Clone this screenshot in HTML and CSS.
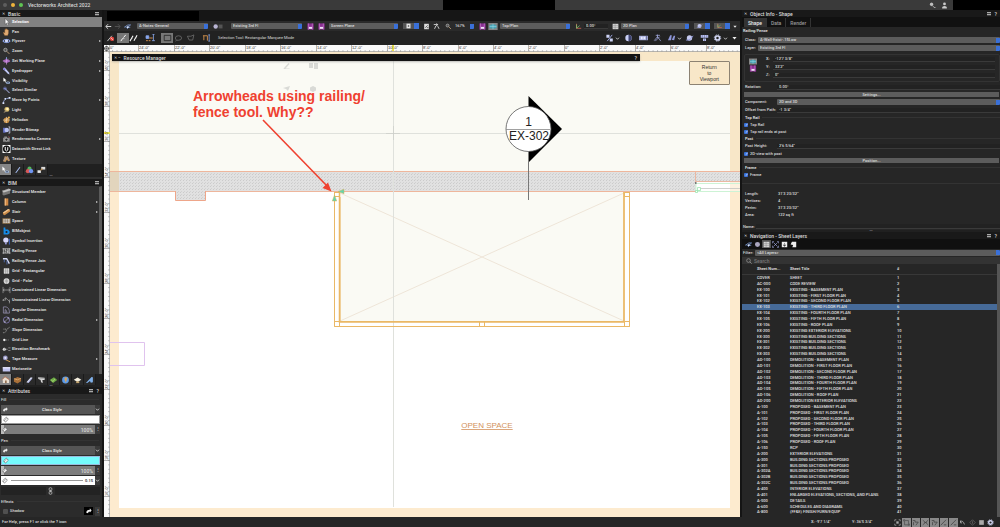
FILE: index.html
```html
<!DOCTYPE html>
<html lang="en">
<head>
<meta charset="utf-8">
<title>Vectorworks Architect 2022</title>
<link rel="stylesheet" href="styles.css">
</head>
<body>
<svg class="defs" width="0" height="0" aria-hidden="true">
<defs>
<symbol id="cursor" viewBox="0 0 9 9"><path d="M3 .5v6.5l1.5-1.3 1.2 2.6 1-.5-1.2-2.5h2z" fill="#fff" stroke="#333" stroke-width=".4"/></symbol>
<symbol id="hand" viewBox="0 0 9 9"><path d="M2.5 8.5L.8 5.2l.8-.5 1 1V1.8h1V.9h1v.5h1.1v.8h1V6l-.9 2.5z" fill="#e0aa72" stroke="#8c5a2a" stroke-width=".4"/></symbol>
<symbol id="fly" viewBox="0 0 9 9"><ellipse cx="4.5" cy="4.5" rx="4" ry="1.8" fill="none" stroke="#7e9be8" stroke-width="1"/><circle cx="4.5" cy="4.3" r="1.9" fill="#d4dcfa"/><path d="M1 3l-.8 2 2 .4zM8 3l.8 2-2 .4z" fill="#9db4f5"/></symbol>
<symbol id="zoom" viewBox="0 0 9 9"><circle cx="3.3" cy="3.3" r="1.9" fill="#555" stroke="#bbb" stroke-width=".8"/><path d="M4.8 4.8L7.8 7.8" stroke="#b99a76" stroke-width="1.1"/></symbol>
<symbol id="plane" viewBox="0 0 9 9"><path d="M0 4.5L4 2l5 2.5L5 7z" fill="#9557ae"/><path d="M4.5.5v8M.5 4.5h8M2 7l5-5" stroke="#d9a0ea" stroke-width=".7"/><path d="M4.5 0l1 1.8h-2z" fill="#6cb5ec"/></symbol>
<symbol id="dropper" viewBox="0 0 9 9"><path d="M1 1l1.5-.3 4.8 5.6.7 2-2-.8L1 2.6z" fill="#c3cbf7"/><path d="M1 1.5l2 2" stroke="#7d6de0" stroke-width="1.6"/></symbol>
<symbol id="vis" viewBox="0 0 9 9"><path d="M1 .5v4.7l1.2-.8.9 1.8.8-.4L3 4h1.6z" fill="#fff"/><ellipse cx="6.2" cy="6.5" rx="2.3" ry="1.4" fill="#9fb9de"/><circle cx="6.2" cy="6.5" r=".8" fill="#334"/></symbol>
<symbol id="wand" viewBox="0 0 9 9"><path d="M3 3l5 5" stroke="#b6bff6" stroke-width="1.1"/><path d="M2.8.5v4.6M.5 2.8h4.6M1.2 1.2l3.2 3.2M4.4 1.2L1.2 4.4" stroke="#8a96ef" stroke-width=".5"/></symbol>
<symbol id="move" viewBox="0 0 9 9"><path d="M1 8q0-5 6.5-5.7" fill="none" stroke="#9ab0e8" stroke-width=".9"/><path d="M0 7h2v2H0zM7 1h2v2H7zM2.3 2.2h1.6v1.6H2.3z" fill="#dde5ff"/></symbol>
<symbol id="light" viewBox="0 0 9 9"><circle cx="5" cy="3.8" r="2.8" fill="#d9bd6d"/><circle cx="5.5" cy="3.3" r="1.4" fill="#fff2bd"/><path d="M1 8l2.3-3.4 1.8 1.7z" fill="#9b8a6a"/></symbol>
<symbol id="helio" viewBox="0 0 9 9"><circle cx="4.5" cy="4.8" r="3.2" fill="#c78b3e"/><path d="M.5 4.5h8M4.5 1v7M2 7l5-5.4" stroke="#ead6b4" stroke-width=".7"/><circle cx="7.2" cy="1.8" r="1.2" fill="#e9b04d"/></symbol>
<symbol id="bitmap" viewBox="0 0 9 9"><path d="M.7 2h3v5.5h-3z" fill="#6673ca"/><circle cx="4.8" cy="4.6" r="2.5" fill="#bbc4f3"/><path d="M6.7 1h1.5v7H6.7" fill="none" stroke="#e7eaff" stroke-width=".8"/></symbol>
<symbol id="camera" viewBox="0 0 9 9"><path d="M.6 3h7.5v4.6H.6zM2 1.7h3V3H2z" fill="#8a8a8a"/><circle cx="4.4" cy="5.2" r="1.6" fill="#222" stroke="#ddd" stroke-width=".5"/><path d="M6.5 1.6l2 1.5" stroke="#c55" stroke-width=".6"/></symbol>
<symbol id="unreal" viewBox="0 0 9 9"><path d="M0 0h9v9H0z" fill="#fff"/><circle cx="4.5" cy="4.5" r="4" fill="#111"/><path d="M3.1 2.2v3.5q1.4 2 2.8 0V2.4" fill="none" stroke="#fff" stroke-width="1.1"/></symbol>
<symbol id="texture" viewBox="0 0 9 9"><path d="M.5 7L2.7 1.2l1.6.7L6 1l2.5 5.2-2.2.8-1.2-2L3.3 7.8z" fill="#c39254"/><path d="M1.5 6.5l2-4M5.5 2l2 4" stroke="#7589d1" stroke-width=".7"/></symbol>
<symbol id="member" viewBox="0 0 9 9"><path d="M0 3l7-2.5 2 .8v2L2 6 0 5z" fill="#aaa"/><path d="M0 5.5L8.5 3.2v3L1.5 8.5 0 7.5z" fill="#777"/><path d="M0 3l1.8 1L9 1.5" fill="none" stroke="#eee" stroke-width=".5"/></symbol>
<symbol id="column" viewBox="0 0 9 9"><path d="M2.5.5h4v8h-4z" fill="#cf8845"/><path d="M2.5.5h1.3v8H2.5z" fill="#f0bb82"/></symbol>
<symbol id="stair" viewBox="0 0 9 9"><path d="M.5 5L6.5 1l2 1v2l-6 4.2-2-1.3z" fill="#cb8c49"/><path d="M.5 5L2 5.9 8 2.1 6.5 1z" fill="#f0c590"/></symbol>
<symbol id="space" viewBox="0 0 9 9"><path d="M0 1.5h9v6H0z" fill="#a58457"/><path d="M1 2.5h7v4H1z" fill="#ddd"/><path d="M3 2.5v4M5.5 2.5v4M1 4.5h7" stroke="#6b573e" stroke-width=".6"/></symbol>
<symbol id="bimobj" viewBox="0 0 9 9"><path d="M1.2.5h2v2.4h3L8 4.7v2.2L6.2 8.5h-5z" fill="#168ce8"/><circle cx="4.5" cy="5.6" r="1.2" fill="#202430"/></symbol>
<symbol id="bulb" viewBox="0 0 9 9"><circle cx="3.8" cy="3.5" r="3" fill="#d8d8fb"/><path d="M2.8 6.3h2v2h-2z" fill="#9a9adb"/><path d="M7.7 2v6.5" stroke="#456cd8"/></symbol>
<symbol id="rail" viewBox="0 0 9 9"><path d="M0 2h9M0 6.8h9M1 1.5v6M3 2v4.8M6 2v4.8M8 1.5v6" stroke="#d4d4d4" stroke-width=".8"/><path d="M2.6 3l3.8 3M6.4 3v3" stroke="#fff" stroke-width=".6"/></symbol>
<symbol id="railjoin" viewBox="0 0 9 9"><path d="M.5 2h4.2l3 5.5" fill="none" stroke="#d7dcf5" stroke-width="1.5"/><path d="M2 3v3M5 4v4.5" stroke="#5d7fd4" stroke-width=".8"/></symbol>
<symbol id="gridr" viewBox="0 0 9 9"><path d="M1.5 1.5h6v6h-6z" fill="#eee"/><path d="M3.5 1v7M5.5 1v7M1 3.5h7M1 5.5h7" stroke="#777" stroke-width=".5"/></symbol>
<symbol id="gridp" viewBox="0 0 9 9"><circle cx="4.5" cy="4.5" r="3.2" fill="#eee"/><path d="M4.5 1v7M1 4.5h7M2 2l5 5M7 2L2 7" stroke="#888" stroke-width=".4"/><circle cx="4.5" cy="4.5" r="1.6" fill="none" stroke="#888" stroke-width=".4"/></symbol>
<symbol id="dim" viewBox="0 0 9 9"><path d="M.6 1v7M8.4 1v7M.6 4.5h7.8M2.2 3.4L.8 4.5l1.4 1.1M6.8 3.4l1.4 1.1-1.4 1.1" fill="none" stroke="#b5b5b5" stroke-width=".7"/></symbol>
<symbol id="udim" viewBox="0 0 9 9"><path d="M.5 5L3.5 2l4.8 4.6M3.5 2v3M7.8 4v4.3M1 3.4L.6 5.1l1.8-.2" fill="none" stroke="#b5b5b5" stroke-width=".7"/></symbol>
<symbol id="adim" viewBox="0 0 9 9"><path d="M1 8V1h3q4 1 3.8 7zM3 8V4q2 .5 2 4" fill="none" stroke="#a9a5c9" stroke-width=".7"/></symbol>
<symbol id="rdim" viewBox="0 0 9 9"><circle cx="4.5" cy="4.5" r="3.5" fill="none" stroke="#8f86c6" stroke-width=".8"/><path d="M2 7l5-5M5.2 2H7v1.8M2 5.2V7h1.8" fill="none" stroke="#c6c2e6" stroke-width=".6"/></symbol>
<symbol id="sdim" viewBox="0 0 9 9"><path d="M.5 7.5q3.5.5 4-3.5L8.5 1M1 3.5h1.2M3.2 2.8v1.5" fill="none" stroke="#aaa" stroke-width=".8" stroke-dasharray="1.6 .5"/></symbol>
<symbol id="gline" viewBox="0 0 9 9"><circle cx="2" cy="4.5" r="1.3" fill="#eee"/><path d="M3 4.5h1.8M6 4.5h.8" stroke="#ccc" stroke-width=".7"/></symbol>
<symbol id="elev" viewBox="0 0 9 9"><circle cx="2" cy="4.8" r="1.7" fill="#eee"/><path d="M2 3v3.6M4 4.8h1.8M6.5 3.2H9M6.5 6.2H9" stroke="#999" stroke-width=".9"/></symbol>
<symbol id="tape" viewBox="0 0 9 9"><circle cx="3.2" cy="3.3" r="2.7" fill="#9b9bc8"/><circle cx="3.2" cy="3.3" r="1.2" fill="#e4e4fa"/><path d="M4 5.6l4.6 2" stroke="#dba650" stroke-width="1"/></symbol>
<symbol id="mario" viewBox="0 0 9 9"><path d="M.3 2.5h8.4v4.8H.3z" fill="#bfc3ef"/><path d="M.3 2.5h8.4v1.3H.3z" fill="#eef"/></symbol>
<symbol id="pencil" viewBox="0 0 9 9"><path d="M2 7.5L6.7 1l1 .7L3 8z" fill="#a9c0f7"/></symbol>
<symbol id="balls" viewBox="0 0 9 9"><circle cx="4.5" cy="2.8" r="2.3" fill="#55b45c"/><circle cx="2.7" cy="5.8" r="2.4" fill="#d85757"/><circle cx="6.3" cy="5.8" r="2.4" fill="#6f95f2"/></symbol>
<symbol id="roller" viewBox="0 0 9 9"><path d="M4.2 1h4.5v3H4.2z" fill="#ddd"/><path d="M0 4.8h3.8v3H0z" fill="#e6e6e6"/><path d="M3.5 5l2-2" stroke="#bd8948" stroke-width="1.2"/></symbol>
<symbol id="house" viewBox="0 0 9 9"><path d="M.5 4.5L4 1l4.5 3v4h-7V4.7z" fill="#e9dfd2"/><path d="M.2 4.5L4 .8l4.8 3.5" fill="none" stroke="#c46c46" stroke-width=".8"/><path d="M4 5h1.8v3H4z" fill="#8f6a4b"/></symbol>
<symbol id="box" viewBox="0 0 9 9"><path d="M.5 3l4-2 4 1.5V6L4.5 8.5l-4-2z" fill="#a86f38"/><path d="M.5 3l4 1.3 4-1.8" fill="none" stroke="#f0c083" stroke-width=".7"/></symbol>
<symbol id="tool" viewBox="0 0 9 9"><path d="M1 7L6 1.5l2 .5-4.5 6z" fill="#d9dcf2"/><path d="M3 7.7L7 3" stroke="#7d84c4" stroke-width=".8"/></symbol>
<symbol id="duct" viewBox="0 0 9 9"><path d="M.5 1.5L8 2v2.5H5.5L6 8 4 7 3.5 4.5 1 3.5z" fill="#d8d8d8"/><path d="M.5 1.5l3 1.5L8 2.7" fill="none" stroke="#777" stroke-width=".5"/></symbol>
<symbol id="land" viewBox="0 0 9 9"><path d="M.3 4.5L5 1.5l3.7 3L4 8z" fill="#6cac45"/><path d="M2 4.5l2 1.7 2-3" fill="none" stroke="#c6e48d" stroke-width=".7"/></symbol>
<symbol id="globe" viewBox="0 0 9 9"><circle cx="4.5" cy="4.5" r="3.8" fill="#5b9bea"/><path d="M3.7 1.3l3 .7-.8 2.2L5 7.5 3.3 4z" fill="#dba55c"/></symbol>
<symbol id="lamp" viewBox="0 0 9 9"><path d="M.3 4.2l4.3-2.4 4.2 2.4-4.2 2.6z" fill="#f6f1e2"/><path d="M3 6h3.5v2H3z" fill="#c3a46d"/></symbol>
<symbol id="plug" viewBox="0 0 9 9"><path d="M.5 8L6.8 1l1.5.3V7L6 7.5 5 5.5 2 8z" fill="#7fb0ea"/></symbol>
<symbol id="link" viewBox="0 0 9 9"><path d="M2 6.5Q2 3 6 3V1.5L8 4 6 6.3V5Q4 5 4 7z" fill="#eee"/></symbol>
<symbol id="can" viewBox="0 0 9 9"><path d="M1.3 5L5 1.5l2.5 2.7L3.8 7.8z" fill="#fff" stroke="#555" stroke-width=".8"/><path d="M2 6.3L5.7 3" stroke="#555" stroke-width=".5"/></symbol>
<symbol id="chain" viewBox="0 0 5 9"><rect x="1" y=".8" width="3" height="3.400" rx="1.2" fill="none" stroke="#ccc" stroke-width=".8"/><rect x="1" y="4.800" width="3" height="3.400" rx="1.2" fill="none" stroke="#ccc" stroke-width=".8"/><path d="M2.500 3v3" stroke="#ccc" stroke-width=".7"/></symbol>
<symbol id="chev" viewBox="0 0 5 9"><path d="M1 3.700l1.500 1.600L4 3.700" fill="none" stroke="currentColor" stroke-width=".8"/></symbol>
<symbol id="back" viewBox="0 0 9 9"><path d="M8 4.5H1.5M4 1.5l-3 3 3 3" fill="none" stroke="#eee" stroke-width="1.1"/></symbol>
<symbol id="fwd" viewBox="0 0 9 9"><path d="M1 4.5h6.5M5 1.5l3 3-3 3" fill="none" stroke="#555" stroke-width="1.1"/></symbol>
<symbol id="share" viewBox="0 0 9 9"><path d="M.3 5.5L5 2.5h4M2 5.5h6M4 7.8l3-5" fill="none" stroke="#8fb2f2" stroke-width=".9"/><circle cx="4.8" cy="5.4" r="1.1" fill="#e1eaff"/></symbol>
<symbol id="layers" viewBox="0 0 12 9"><circle cx="3" cy="4.5" r="2.8" fill="#b9b5d4"/><path d="M6.8 2h5v5h-5z" fill="#555"/></symbol>
<symbol id="purple" viewBox="0 0 9 9"><path d="M.5.5h8v8h-8z" fill="#8a2f91"/><path d="M2 .5v8M6.8.5v8" stroke="#d48bdc" stroke-width=".7"/><path d="M2.5 5h4v2.5h-4z" fill="#eee3f4"/></symbol>
<symbol id="teal" viewBox="0 0 12 9"><path d="M0 0h12v9H0z" fill="#858585"/><path d="M1.5 3q4.5-2.5 9 0v3.5q-4.5 2-9 0z" fill="#49a4b5"/><path d="M6 1v7M1.5 4.5h9" stroke="#a8e3ef" stroke-width=".6"/></symbol>
<symbol id="page" viewBox="0 0 9 9"><path d="M1.5 1h6v7h-6z" fill="#dedede"/><path d="M3 6l3-3M5 6h2" stroke="#444" stroke-width="1"/></symbol>
<symbol id="swap" viewBox="0 0 9 9"><path d="M1 2h5l-1.5-1.5M6.5 2Q3 3 2 7.5M6 4l1.8 3.5" fill="none" stroke="#ddd" stroke-width="1.1"/></symbol>
<symbol id="axis" viewBox="0 0 9 9"><path d="M2 1v5.8h6" fill="none" stroke="#d65" stroke-width="1"/><path d="M2 2v4.8l4-3.5" fill="none" stroke="#7dcd72" stroke-width=".9"/></symbol>
<symbol id="list" viewBox="0 0 9 9"><path d="M.8 1h7.4v7H.8z" fill="#d4d4d4"/><path d="M.8 3.3h7.4M.8 5.6h7.4M4 1v7" stroke="#777" stroke-width=".5"/></symbol>
<symbol id="snapoff" viewBox="0 0 9 9"><path d="M1 8l5-6" stroke="#ddd" stroke-width="1"/><circle cx="6.2" cy="5.5" r="2.4" fill="#e6453d"/><path d="M4.8 4.2L7.6 6.9" stroke="#fff" stroke-width=".7"/></symbol>
<symbol id="bolt" viewBox="0 0 9 9"><path d="M1.5 8l2-3M4.5 4L7 1" stroke="#fff" stroke-width="1.1"/><path d="M3 5.2h2.6" stroke="#ddd" stroke-width=".8"/></symbol>
<symbol id="bolts" viewBox="0 0 9 9"><path d="M.5 8L4 2M5 7.5L8.5 1.5" stroke="#fff" stroke-width="1.2"/><path d="M2 4.5h2M6 4.3h2" stroke="#bbb" stroke-width=".7"/></symbol>
<symbol id="brace" viewBox="0 0 10 9"><path d="M0 2h3v3H0zM6.6 0H10M8.3 0v7.5M6.6 7.5H10" fill="#8aa8ef" stroke="#8aa8ef" stroke-width=".9"/><path d="M3.5 4.5h4M0 7.5h2M3 7.5h2" stroke="#e39a51" stroke-width="1"/></symbol>
<symbol id="marq" viewBox="0 0 9 9"><path d="M.8 1.5h7.4v6H.8z" fill="#777" stroke="#222" stroke-width=".9"/></symbol>
<symbol id="lasso" viewBox="0 0 9 9"><path d="M1 4.5Q1 2 4.5 2T8 4.5 4.5 7H2.5L1 8M2.5 7Q1 6 1 4.5" fill="none" stroke="#777" stroke-width=".8"/></symbol>
<symbol id="poly" viewBox="0 0 9 9"><path d="M1 2.5h4L8.3 1 7 6.8H3z" fill="none" stroke="#777" stroke-width=".8"/></symbol>
<symbol id="door" viewBox="0 0 9 9"><path d="M.5 2h5v5.5M1.5 2v5" fill="none" stroke="#c98b4c" stroke-width="1.1"/><path d="M7.5 1v7M6.5 1h2M6.5 8h2" stroke="#8fb0f7" stroke-width=".8"/></symbol>
<symbol id="pct" viewBox="0 0 9 9"><path d="M1 .8h3.500v3.500H1zM4.800 5h3.400v3.400H4.800z" fill="#cdd3f5"/><path d="M2 8L7.5 1" stroke="#9aa3dc" stroke-width="1.1"/></symbol>
<symbol id="half" viewBox="0 0 9 9"><circle cx="4.5" cy="4.5" r="3.6" fill="#c9cff5"/><path d="M4.5.9a3.6 3.6 0 010 7.2z" fill="#3e4370"/></symbol>
<symbol id="reel" viewBox="0 0 10 9"><path d="M0 2h10v5H0z" fill="#aab1df"/><path d="M2 3h2v3H2zM5 3h2v3H5z" fill="#e9ebff"/><path d="M8.5 2v5" stroke="#3b3f66" stroke-width=".7"/></symbol>
<symbol id="spark" viewBox="0 0 9 9"><path d="M.8 7.5L4.5 3l3.7 5M4.5.6v4M2.5 1.5h4.8M2 8l5-5" fill="none" stroke="#aab2e8" stroke-width=".8"/></symbol>
<symbol id="pipe" viewBox="0 0 9 9"><path d="M.5 7L3 1.5h1.8L4 7zM4.8 6.5L7 2h1.7L7.5 7z" fill="#8e96d7"/></symbol>
<symbol id="saturn" viewBox="0 0 9 9"><circle cx="4.5" cy="4.5" r="3" fill="#c5caf0"/><path d="M.5 6.8q5 1 8-4.8" fill="none" stroke="#8f97da" stroke-width="1"/></symbol>
<symbol id="tee" viewBox="0 0 9 9"><path d="M.3 1.2h8.4v3H.3zM2.8 5h3.4v3H2.8z" fill="#b9c0ee"/><path d="M4.5 1v7M2 1v3M7 1v3" stroke="#4a4f7a" stroke-width=".5"/></symbol>
<symbol id="gear" viewBox="0 0 9 9"><circle cx="4.5" cy="4.5" r="2.3" fill="none" stroke="currentColor" stroke-width="1.8"/><circle cx="4.5" cy="4.5" r="3.6" fill="none" stroke="currentColor" stroke-width="1" stroke-dasharray="1.5 1.33"/></symbol>
<symbol id="down" viewBox="0 0 6 9"><path d="M.5 3.2h5L3 6.2z" fill="#eee"/></symbol>
<symbol id="lens" viewBox="0 0 9 9"><circle cx="3.8" cy="3.8" r="2.8" fill="none" stroke="#aaa" stroke-width=".9"/><path d="M5.8 5.8L8.5 8.5" stroke="#aaa" stroke-width="1"/></symbol>
<symbol id="seek" viewBox="0 0 9 9"><circle cx="3.300" cy="3" r="1.700" fill="#bbb" stroke="#ddd" stroke-width=".8"/><path d="M4.800 4.800l1.600 2.200h2" fill="none" stroke="#ccc" stroke-width=".9"/></symbol>
<symbol id="person" viewBox="0 0 9 9"><circle cx="4.5" cy="2.5" r="1.8" fill="#ccc"/><path d="M1.5 8.5V7q0-2 3-2t3 2v1.5z" fill="#ccc"/></symbol>
<symbol id="ball" viewBox="0 0 9 9"><circle cx="4.5" cy="4.5" r="3.2" fill="#aaa6bf"/></symbol>
<symbol id="vp" viewBox="0 0 9 9"><path d="M.5 3V.8h2M6.5.8h2V3M8.5 6v2.2h-2M2.5 8.2h-2V6M2 2l5 5M7 2L2 7" fill="none" stroke="#a8b0ea" stroke-width=".8"/></symbol>
<symbol id="fit" viewBox="0 0 9 9"><path d="M1.500 1h6v7h-6z" fill="#e4e4e4"/><path d="M3.500 3h2v3h-2z" fill="#777"/></symbol>
<symbol id="pin" viewBox="0 0 9 9"><path d="M1 1h7v7H1z" fill="#eee"/><path d="M4.5 2.5v2M3 5h3L4.5 7z" stroke="#444" fill="#444" stroke-width=".7"/></symbol>
<symbol id="flag" viewBox="0 0 9 9"><path d="M2.5 1H8v7H3L4 5 .8 4.4z" fill="#eee"/></symbol>
<symbol id="diag" viewBox="0 0 9 9"><path d="M1 8L7.8 1M5 7.5h3" stroke="#444" stroke-width="1"/></symbol>
<symbol id="cross" viewBox="0 0 9 9"><path d="M1 1.5l7 6M8 1.5l-7 6M3 4.5h3" stroke="#444" stroke-width=".9"/></symbol>
<symbol id="sq" viewBox="0 0 9 9"><path d="M2 2h5v5.500H2zM.7 1h2M.7 1v2M8.300 8h-2M8.300 8V6" fill="none" stroke="#444" stroke-width=".8"/></symbol>
<symbol id="ang" viewBox="0 0 9 9"><path d="M1 2h3v2h4M2 8V4M5 8l3-4" fill="none" stroke="#444" stroke-width="1"/></symbol>
<symbol id="snapg" viewBox="0 0 9 9"><path d="M1 3V1h2M6 1h2v2M8 6v2H6M3 8H1V6" fill="none" stroke="#bbb" stroke-width=".8"/><path d="M3 3h3v3H3z" fill="#aaa"/></symbol>
<symbol id="arc" viewBox="0 0 9 9"><path d="M1.500 3.500Q5 1 7 7M2 2v3h2" fill="none" stroke="#bbb" stroke-width="1"/></symbol>
<symbol id="diam" viewBox="0 0 9 9"><path d="M4.500 1L8 4.500 4.500 8 1 4.500zM4.500 3v3" fill="none" stroke="#777" stroke-width=".8"/></symbol>
<symbol id="block" viewBox="0 0 9 9"><path d="M1.500 1.500h6v6h-6z" fill="#aaa"/></symbol>
</defs>
</svg>

<div class="app">
<header class="titlebar">
  <span class="lights"><i class="light"></i><i class="light amber"></i><i class="light green"></i></span>
  <h1 class="app-title">Vectorworks Architect 2022</h1>
  <span class="mask mask-mid"></span>
  <svg class="ic"><use href="#seek"/></svg>
  <svg class="ic"><use href="#person"/></svg>
  <span class="mask mask-end"></span>
</header>

<aside class="palettes">
  <section class="basic">
    <h2 class="bar"><span>✕</span> Basic <span class="bar-end"><i class="ham"></i></span></h2>
    <ul class="tools">
      <li class="tool on"><svg class="ic"><use href="#cursor"/></svg>Selection</li>
      <li class="tool"><svg class="ic"><use href="#hand"/></svg>Pan</li>
      <li class="tool more"><svg class="ic"><use href="#fly"/></svg>Flyover</li>
      <li class="tool"><svg class="ic"><use href="#zoom"/></svg>Zoom</li>
      <li class="tool more"><svg class="ic"><use href="#plane"/></svg>Set Working Plane</li>
      <li class="tool more"><svg class="ic"><use href="#dropper"/></svg>Eyedropper</li>
      <li class="tool"><svg class="ic"><use href="#vis"/></svg>Visibility</li>
      <li class="tool"><svg class="ic"><use href="#wand"/></svg>Select Similar</li>
      <li class="tool more"><svg class="ic"><use href="#move"/></svg>Move by Points</li>
      <li class="tool"><svg class="ic"><use href="#light"/></svg>Light</li>
      <li class="tool"><svg class="ic"><use href="#helio"/></svg>Heliodon</li>
      <li class="tool"><svg class="ic"><use href="#bitmap"/></svg>Render Bitmap</li>
      <li class="tool more"><svg class="ic"><use href="#camera"/></svg>Renderworks Camera</li>
      <li class="tool"><svg class="ic"><use href="#unreal"/></svg>Datasmith Direct Link</li>
      <li class="tool"><svg class="ic"><use href="#texture"/></svg>Texture</li>
    </ul>
    <div class="tabs">
      <button class="tab on" aria-label="Select"><svg class="ic"><use href="#vis"/></svg></button>
      <button class="tab" aria-label="Draw"><svg class="ic"><use href="#pencil"/></svg></button>
      <button class="tab" aria-label="Render"><svg class="ic"><use href="#balls"/></svg></button>
      <button class="tab" aria-label="Attributes"><svg class="ic"><use href="#roller"/></svg></button>
    </div>
    <div class="grip">•••</div>
  </section>
  <section>
    <h2 class="bar"><span>✕</span> BIM <span class="bar-end"><i class="ham"></i></span></h2>
    <ul class="tools bim">
      <li class="tool"><svg class="ic"><use href="#member"/></svg>Structural Member</li>
      <li class="tool more"><svg class="ic"><use href="#column"/></svg>Column</li>
      <li class="tool more"><svg class="ic"><use href="#stair"/></svg>Stair</li>
      <li class="tool"><svg class="ic"><use href="#space"/></svg>Space</li>
      <li class="tool"><svg class="ic"><use href="#bimobj"/></svg>BIMobject</li>
      <li class="tool"><svg class="ic"><use href="#bulb"/></svg>Symbol Insertion</li>
      <li class="tool"><svg class="ic"><use href="#rail"/></svg>Railing/Fence</li>
      <li class="tool"><svg class="ic"><use href="#railjoin"/></svg>Railing/Fence Join</li>
      <li class="tool"><svg class="ic"><use href="#gridr"/></svg>Grid - Rectangular</li>
      <li class="tool"><svg class="ic"><use href="#gridp"/></svg>Grid - Polar</li>
      <li class="tool"><svg class="ic"><use href="#dim"/></svg>Constrained Linear Dimension</li>
      <li class="tool"><svg class="ic"><use href="#udim"/></svg>Unconstrained Linear Dimension</li>
      <li class="tool"><svg class="ic"><use href="#adim"/></svg>Angular Dimension</li>
      <li class="tool more"><svg class="ic"><use href="#rdim"/></svg>Radial Dimension</li>
      <li class="tool"><svg class="ic"><use href="#sdim"/></svg>Slope Dimension</li>
      <li class="tool"><svg class="ic"><use href="#gline"/></svg>Grid Line</li>
      <li class="tool"><svg class="ic"><use href="#elev"/></svg>Elevation Benchmark</li>
      <li class="tool more"><svg class="ic"><use href="#tape"/></svg>Tape Measure</li>
      <li class="tool"><svg class="ic"><use href="#mario"/></svg>Marionette</li>
    </ul>
    <div class="tabs">
      <button class="tab on" aria-label="Building"><svg class="ic"><use href="#house"/></svg></button>
      <button class="tab" aria-label="Objects"><svg class="ic"><use href="#box"/></svg></button>
      <button class="tab" aria-label="Detailing"><svg class="ic"><use href="#tool"/></svg></button>
      <button class="tab" aria-label="Services"><svg class="ic"><use href="#duct"/></svg></button>
      <button class="tab" aria-label="Site"><svg class="ic"><use href="#land"/></svg></button>
      <button class="tab" aria-label="GIS"><svg class="ic"><use href="#globe"/></svg></button>
      <button class="tab" aria-label="Lighting"><svg class="ic"><use href="#lamp"/></svg></button>
      <button class="tab" aria-label="Connect"><svg class="ic"><use href="#plug"/></svg></button>
    </div>
    <div class="grip">•••</div>
  </section>
  <section class="attrs">
    <h2 class="bar"><span>✕</span> Attributes <span class="bar-end"><i class="ham"></i>?</span></h2>
    <h3 class="legend attr-legend">Fill</h3>
    <div class="attr"><svg class="ic"><use href="#link"/></svg><select class="attr-select" aria-label="Fill style"><option>Class Style</option></select><svg class="caret"><use href="#chev"/></svg></div>
    <button class="attr swatch" aria-label="Fill color"><svg class="ic"><use href="#can"/></svg></button>
    <div class="attr slider"><svg class="ic"><use href="#can"/></svg><span class="pct">100%</span><span class="caret">⋮</span></div>
    <h3 class="legend attr-legend">Pen</h3>
    <div class="attr"><svg class="ic"><use href="#link"/></svg><select class="attr-select" aria-label="Pen style"><option>Class Style</option></select><svg class="caret"><use href="#chev"/></svg></div>
    <button class="attr swatch cyan" aria-label="Pen color"><svg class="ic"><use href="#can"/></svg></button>
    <div class="attr slider"><svg class="ic"><use href="#can"/></svg><span class="pct">100%</span><span class="caret">⋮</span></div>
    <div class="attr weight"><svg class="ic"><use href="#can"/></svg><span class="stroke"></span><span>0.15</span><svg class="caret"><use href="#chev"/></svg></div>
    <div class="attr ends"><span class="end"></span><svg class="chain"><use href="#chain"/></svg><span class="end"></span></div>
    <h3 class="legend attr-legend">Effects</h3>
    <div class="shadow"><label class="check"><input type="checkbox" class="box dim">Shadow</label><svg class="ic dark"><use href="#link"/></svg><span class="caret">⋮</span></div>
  </section>
</aside>

<main class="work">
  <div class="docbar"><span class="mask doc-mask"></span></div>
  <div class="viewbar">
    <svg class="ic"><use href="#back"/></svg>
    <svg class="ic"><use href="#fwd"/></svg>
    <svg class="ic"><use href="#share"/></svg>
    <select class="sel" aria-label="Class"><option>A-Notes-General</option></select>
    <svg class="ic wide"><use href="#layers"/></svg>
    <select class="sel" aria-label="Layer"><option>Existing 3rd Fl</option></select>
    <svg class="ic"><use href="#purple"/></svg>
    <svg class="ic"><use href="#purple"/></svg>
    <select class="sel" aria-label="Plane"><option>Screen Plane</option></select>
    <span class="mini"><svg class="ic"><use href="#fit"/></svg></span>
    <svg class="ic"><use href="#page"/></svg>
    <svg class="ic"><use href="#swap"/></svg>
    <svg class="ic"><use href="#zoom"/></svg>
    <select class="sel flat" aria-label="Zoom"><option>167%</option></select>
    <svg class="ic"><use href="#purple"/></svg>
    <svg class="ic wide"><use href="#teal"/></svg>
    <select class="sel" aria-label="View"><option>Top/Plan</option></select>
    <svg class="ic"><use href="#axis"/></svg>
    <input class="field" aria-label="Plan rotation" value="0.00°">
    <svg class="ic"><use href="#list"/></svg>
    <select class="sel" aria-label="Projection"><option>2D Plan</option></select>
    <span class="mini"><svg class="ic"><use href="#saturn"/></svg></span>
    <span class="mini"><svg class="ic"><use href="#axis"/></svg></span>
    <svg class="ic slim"><use href="#down"/></svg>
  </div>
  <div class="modebar">
    <svg class="ic"><use href="#snapoff"/></svg>
    <button class="mode on" aria-label="Enable scaling"><svg class="ic"><use href="#bolt"/></svg></button>
    <svg class="ic"><use href="#bolts"/></svg>
    <svg class="ic wide"><use href="#brace"/></svg>
    <button class="mode on" aria-label="Rectangular marquee"><svg class="ic"><use href="#marq"/></svg></button>
    <svg class="ic"><use href="#lasso"/></svg>
    <svg class="ic"><use href="#poly"/></svg>
    <svg class="ic"><use href="#door"/></svg>
    <span class="hint">Selection Tool: Rectangular Marquee Mode</span>
    <span class="pair"><svg class="ic"><use href="#pct"/></svg><svg class="chev"><use href="#chev"/></svg></span>
    <svg class="ic"><use href="#half"/></svg>
    <svg class="ic wide"><use href="#reel"/></svg>
    <svg class="ic"><use href="#spark"/></svg>
    <span class="pair"><svg class="ic"><use href="#pipe"/></svg><svg class="chev"><use href="#chev"/></svg></span>
    <svg class="ic"><use href="#saturn"/></svg>
    <svg class="ic"><use href="#tee"/></svg>
    <span class="pair"><svg class="ic gear"><use href="#gear"/></svg><svg class="chev"><use href="#chev"/></svg></span>
    <svg class="ic slim"><use href="#down"/></svg>
  </div>

  <div class="canvas">
    <svg class="drawing" viewBox="104 45 636 472" preserveAspectRatio="xMinYMin slice">
      <defs>
        <pattern id="dots" width="3" height="3" patternUnits="userSpaceOnUse"><rect width="3" height="3" fill="#e1e1e1"/><rect width="1" height="1" fill="#cbcbcb"/><rect x="1" y="2" width="1" height="1" fill="#d2d2d2"/></pattern>
        <pattern id="hticks" x="564" y="45" width="4.430" height="7" patternUnits="userSpaceOnUse"><path d="M.5 5v2" stroke="#999" stroke-width=".6"/></pattern>
        <pattern id="vticks" x="104" y="141" width="6" height="4.430" patternUnits="userSpaceOnUse"><path d="M4 .5h2" stroke="#999" stroke-width=".6"/></pattern>
      </defs>
      <rect x="104" y="45" width="636" height="472" fill="#fdebcf"/>
      <rect x="104" y="45" width="636" height="126" fill="#f8e7c8"/>
      <rect x="119" y="61" width="611" height="111" fill="#fafaf4"/>
      <rect x="119" y="191" width="611" height="317" fill="#fff"/>
      <rect x="119" y="171" width="621" height="20" fill="url(#dots)"/>
      <rect x="110" y="171" width="9" height="20" fill="#e2d5bd"/>
      <path d="M110 171.500H740M104 191.500H696" stroke="#eeb69c" stroke-width="1"/>
      <path d="M175.500 191v9.500h30V191" fill="url(#dots)" stroke="#eea68a"/>
      <path d="M696 182h34v10h-34z" fill="#fff"/>
      <path d="M730 182h10v10h-10z" fill="#fdf2e0"/>
      <path d="M695.500 172v10M696 181.500h44" fill="none" stroke="#eab8a2"/>
      <path d="M740 183.500h-44v8h44" fill="none" stroke="#cdf3d5"/>
      <path d="M700 188.500h40" stroke="#b9bdba" stroke-width=".7"/>
      <path d="M695 182h1.500v2H695z" fill="#777"/>
      <path d="M697.500 187.500h3v3h-3zM695.500 190.500h2v2h-2z" fill="#fff" stroke="#8fe3a6" stroke-width=".7"/>
      <rect x="340" y="192" width="284" height="130" fill="#fafaf4"/>
      <path d="M340 193L624 321M624 193L340 321" stroke="#eee5d8"/>
      <path d="M393.500 61V507M119 133.500H730" stroke="#dfe1dc" stroke-width="1"/>
      <path d="M386 133.500h14M393.500 126v14" stroke="#c9cbc6" stroke-width=".6"/>
      <g fill="none" stroke="#eab866">
        <path d="M334.500 192V326.500H629.500V192M340 197V321.500H624V192" stroke-width="1"/>
        <path d="M339.500 192V322H624V192" stroke-width="1.500"/>
        <path d="M334.500 192.500h5v4h-5zM624.500 192.500h5v4h-5zM334.500 321.500h5v5h-5zM624.500 321.500h5v5h-5zM479.500 321.500h5v5h-5z"/>
      </g>
      <path d="M338 191.500l6-2.200v4.400zM334.500 195l-2.200 6h4.400z" fill="#62d6ae" stroke="#d8b35a" stroke-width=".5"/>
      <path d="M528.500 96L562 129l-33.500 33.500z" fill="#000"/>
      <path d="M528.500 162V200" stroke="#777"/>
      <circle cx="528.500" cy="129" r="22.500" fill="#fff" stroke="#555" stroke-width=".8"/>
      <path d="M506 129.500h44" stroke="#888" stroke-width=".8"/>
      <text class="marker" x="528.500" y="126">1</text>
      <text class="marker" x="529" y="140">EX-302</text>
      <path d="M263 120L328 187" stroke="#ef4130" stroke-width="1.600"/>
      <path d="M331.500 191.500l-9-3.500 5.500-5.500z" fill="#ef4130"/>
      <text class="note" x="193" y="101">Arrowheads using railing/</text>
      <text class="note" x="193" y="117">fence tool. Why??</text>
      <text class="room" x="487" y="428">OPEN SPACE</text>
      <path d="M110 342.500h34.500v23H110" fill="none" stroke="#e0c3ee"/>
      <g fill="#d9dad6">
        <path d="M284 68l4.500-5 1 1-4 4.500h4v.5h-6zM309 63h4v5h-4zM314 63h4v6h-4zM283 88l7-2-2 5-2-2zM313 86l3 1.500v3l-3 1.500-3-1.500v-3z"/>
      </g>

      <rect x="104" y="45" width="636" height="6.500" fill="#fafafa"/>
      <rect x="104" y="45" width="636" height="7" fill="url(#hticks)"/>
      <rect x="104" y="52" width="6" height="465" fill="#fafafa"/>
      <rect x="104" y="52" width="6" height="465" fill="url(#vticks)"/>
      <path d="M104 51.500h636M109.500 45v472" stroke="#999" stroke-width=".7"/>
      <path d="M138.500 45v6M174.500 45v6M209.500 45v6M245.500 45v6M280.500 45v6M316.500 45v6M351.500 45v6M387.500 45v6M422.500 45v6M458.500 45v6M493.500 45v6M528.500 45v6M564.500 45v6M599.500 45v6M635.500 45v6M670.500 45v6M706.500 45v6M104 70.500h6M104 106.500h6M104 141.500h6M104 177.500h6M104 212.500h6M104 248.500h6M104 283.500h6M104 318.500h6M104 354.500h6M104 389.500h6M104 425.500h6M104 460.500h6M104 496.500h6" stroke="#888" stroke-width=".6"/>
      <path d="M393 45v6M104 133h6" stroke="#efe24c" stroke-width="2"/>
      <circle cx="106.500" cy="48.500" r="2" fill="none" stroke="#333" stroke-width=".8"/><path d="M106.500 45.500v6M103.500 48.500h6" stroke="#333" stroke-width=".5"/>
      <g class="tick">
        <text x="110" y="49">0"</text><text x="139" y="49">24'-0"</text><text x="175" y="49">22'-0"</text><text x="210" y="49">20'-0"</text><text x="246" y="49">18'-0"</text><text x="281" y="49">16'-0"</text><text x="317" y="49">14'-0"</text><text x="352" y="49">12'-0"</text><text x="388" y="49">10'-0"</text><text x="423" y="49">8'-0"</text><text x="459" y="49">6'-0"</text><text x="494" y="49">4'-0"</text><text x="529" y="49">2'-0"</text><text x="565" y="49">0"</text><text x="600" y="49">2'-0"</text><text x="636" y="49">4'-0"</text><text x="671" y="49">6'-0"</text><text x="707" y="49">8'-0"</text>
        <text transform="translate(108 70) rotate(-90)">40'-0"</text><text transform="translate(108 106) rotate(-90)">38'-0"</text><text transform="translate(108 141) rotate(-90)">36'-0"</text><text transform="translate(108 177) rotate(-90)">34'-0"</text><text transform="translate(108 212) rotate(-90)">32'-0"</text><text transform="translate(108 248) rotate(-90)">30'-0"</text><text transform="translate(108 283) rotate(-90)">28'-0"</text><text transform="translate(108 318) rotate(-90)">26'-0"</text><text transform="translate(108 354) rotate(-90)">24'-0"</text><text transform="translate(108 389) rotate(-90)">22'-0"</text><text transform="translate(108 425) rotate(-90)">20'-0"</text><text transform="translate(108 460) rotate(-90)">18'-0"</text><text transform="translate(108 496) rotate(-90)">16'-0"</text>
      </g>
    </svg>
    <div class="floating"><span>✕ –</span> Resource Manager <span class="bar-end">?</span></div>
    <button class="return">Return<br>to<br>Viewport</button>
  </div>
</main>

<aside class="info">
  <section>
    <h2 class="bar"><span>✕</span> Object Info - Shape <span class="bar-end"><i class="ham"></i>?</span></h2>
    <div class="info-tabs"><button class="info-tab on">Shape</button><button class="info-tab">Data</button><button class="info-tab">Render</button></div>
    <h3 class="obj">Railing/Fence</h3>
    <div class="row short"><label for="cls">Class:</label><select id="cls" class="sel"><option>A-Wall-Exist-.15Low</option></select></div>
    <div class="row short"><label for="lay">Layer:</label><select id="lay" class="sel"><option>Existing 3rd Fl</option></select></div>
    <div class="coords">
      <span class="locks"><svg class="ic"><use href="#teal"/></svg><svg class="ic"><use href="#purple"/></svg></span>
      <div>
        <div class="row xyz"><label for="x">X:</label><input id="x" class="field" value="-12'7 3/8&quot;"></div>
        <div class="row xyz"><label for="y">Y:</label><input id="y" class="field" value="33'2&quot;"></div>
        <div class="row xyz"><label for="z">Z:</label><input id="z" class="field" value="0&quot;"></div>
      </div>
    </div>
    <div class="row"><label for="rot">Rotation:</label><input id="rot" class="field" value="0.00°"></div>
    <button class="wide-btn">Settings...</button>
    <div class="row"><label for="cmp">Component:</label><select id="cmp" class="sel"><option>2D and 3D</option></select></div>
    <div class="row"><label for="off">Offset from Path:</label><input id="off" class="field" value="-1 3/4&quot;"></div>
    <h3 class="legend">Top Rail</h3>
    <label class="check"><input type="checkbox" class="box" checked>Top Rail</label>
    <label class="check"><input type="checkbox" class="box" checked>Top rail ends at post</label>
    <h3 class="legend">Post</h3>
    <div class="row"><label for="ph">Post Height:</label><input id="ph" class="field" value="2'6 5/64&quot;"></div>
    <label class="check"><input type="checkbox" class="box" checked>2D-view with post</label>
    <button class="wide-btn">Position...</button>
    <h3 class="legend">Frame</h3>
    <label class="check"><input type="checkbox" class="box" checked>Frame</label>
    <dl class="facts">
      <dt>Length:</dt><dd>31'3 23/32"</dd>
      <dt>Vertices:</dt><dd>4</dd>
      <dt>Perim:</dt><dd>31'3 23/32"</dd>
      <dt>Area:</dt><dd>122 sq ft</dd>
    </dl>
    <div class="row name"><label for="nm">Name:</label><input id="nm" class="field"></div>
  </section>
  <div class="grip">•••</div>
  <section class="nav">
    <h2 class="bar"><span>✕</span> Navigation - Sheet Layers <span class="bar-end"><i class="ham"></i>?</span></h2>
    <div class="nav-tabs">
      <button class="nav-tab" aria-label="Classes"><svg class="ic"><use href="#share"/></svg></button>
      <button class="nav-tab" aria-label="Design layers"><svg class="ic"><use href="#ball"/></svg></button>
      <button class="nav-tab on" aria-label="Sheet layers"><svg class="ic"><use href="#list"/></svg></button>
      <button class="nav-tab" aria-label="Viewports"><svg class="ic"><use href="#vp"/></svg></button>
      <button class="nav-tab" aria-label="Saved views"><svg class="ic"><use href="#pin"/></svg></button>
      <button class="nav-tab" aria-label="References"><svg class="ic"><use href="#flag"/></svg></button>
    </div>
    <div class="row filter"><label for="flt">Filter:</label><select id="flt" class="sel"><option>&lt;All Layers&gt;</option></select></div>
    <div class="search"><svg class="ic"><use href="#lens"/></svg><input class="search-in" placeholder="Search" aria-label="Search"></div>
    <div class="sheets">
    <table class="sheet-table">
      <thead><tr><th>Sheet Num...</th><th>Sheet Title</th><th>#</th></tr></thead>
      <tbody>
      <tr><td>COVER</td><td>SHEET</td><td>1</td></tr>
      <tr><td>AC-000</td><td>CODE REVIEW</td><td>2</td></tr>
      <tr><td>EX-100</td><td>EXISTING - BASEMENT PLAN</td><td>3</td></tr>
      <tr><td>EX-101</td><td>EXISTING - FIRST FLOOR PLAN</td><td>4</td></tr>
      <tr><td>EX-102</td><td>EXISTING - SECOND FLOOR PLAN</td><td>5</td></tr>
      <tr class="picked"><td>EX-103</td><td>EXISTING - THIRD FLOOR PLAN</td><td>6</td></tr>
      <tr><td>EX-104</td><td>EXISTING - FOURTH FLOOR PLAN</td><td>7</td></tr>
      <tr><td>EX-105</td><td>EXISTING - FIFTH FLOOR PLAN</td><td>8</td></tr>
      <tr><td>EX-106</td><td>EXISTING - ROOF PLAN</td><td>9</td></tr>
      <tr><td>EX-200</td><td>EXISTING EXTERIOR ELEVATIONS</td><td>10</td></tr>
      <tr><td>EX-300</td><td>EXISTING BUILDING SECTIONS</td><td>11</td></tr>
      <tr><td>EX-301</td><td>EXISTING BUILDING SECTIONS</td><td>12</td></tr>
      <tr><td>EX-302</td><td>EXISTING BUILDING SECTIONS</td><td>13</td></tr>
      <tr><td>EX-303</td><td>EXISTING BUILDING SECTIONS</td><td>14</td></tr>
      <tr><td>AD-100</td><td>DEMOLITION - BASEMENT PLAN</td><td>15</td></tr>
      <tr><td>AD-101</td><td>DEMOLITION - FIRST FLOOR PLAN</td><td>16</td></tr>
      <tr><td>AD-102</td><td>DEMOLITION - SECOND FLOOR PLAN</td><td>17</td></tr>
      <tr><td>AD-103</td><td>DEMOLITION - THIRD FLOOR PLAN</td><td>18</td></tr>
      <tr><td>AD-104</td><td>DEMOLITION - FOURTH FLOOR PLAN</td><td>19</td></tr>
      <tr><td>AD-105</td><td>DEMOLITION - FIFTH FLOOR PLAN</td><td>20</td></tr>
      <tr><td>AD-106</td><td>DEMOLITION - ROOF PLAN</td><td>21</td></tr>
      <tr><td>AD-200</td><td>DEMOLITION EXTERIOR ELEVATIONS</td><td>22</td></tr>
      <tr><td>A-100</td><td>PROPOSED - BASEMENT PLAN</td><td>23</td></tr>
      <tr><td>A-101</td><td>PROPOSED - FIRST FLOOR PLAN</td><td>24</td></tr>
      <tr><td>A-102</td><td>PROPOSED - SECOND FLOOR PLAN</td><td>25</td></tr>
      <tr><td>A-103</td><td>PROPOSED - THIRD FLOOR PLAN</td><td>26</td></tr>
      <tr><td>A-104</td><td>PROPOSED - FOURTH FLOOR PLAN</td><td>27</td></tr>
      <tr><td>A-105</td><td>PROPOSED - FIFTH FLOOR PLAN</td><td>28</td></tr>
      <tr><td>A-106</td><td>PROPOSED - ROOF PLAN</td><td>29</td></tr>
      <tr><td>A-150</td><td>RCP</td><td>30</td></tr>
      <tr><td>A-200</td><td>EXTERIOR ELEVATIONS</td><td>31</td></tr>
      <tr><td>A-300</td><td>BUILDING SECTIONS PROPOSED</td><td>32</td></tr>
      <tr><td>A-301</td><td>BUILDING SECTIONS PROPOSED</td><td>33</td></tr>
      <tr><td>A-302A</td><td>BUILDING SECTIONS PROPOSED</td><td>34</td></tr>
      <tr><td>A-302B</td><td>BUILDING SECTIONS PROPOSED</td><td>35</td></tr>
      <tr><td>A-302C</td><td>BUILDING SECTIONS PROPOSED</td><td>36</td></tr>
      <tr><td>A-400</td><td>INTERIOR ELEVATIONS</td><td>37</td></tr>
      <tr><td>A-401</td><td>ENLARGED ELEVATIONS, SECTIONS, AND PLANS</td><td>38</td></tr>
      <tr><td>A-500</td><td>DETAILS</td><td>39</td></tr>
      <tr><td>A-600</td><td>SCHEDULES AND DIAGRAMS</td><td>40</td></tr>
      <tr><td>A-800</td><td>(FF&amp;E) FINISH/FURN/EQUIP</td><td>41</td></tr>
      </tbody>
    </table>
    </div>
  </section>
</aside>

<footer class="status">
  <span>For Help, press F1 or click the ? icon</span>
  <span class="pos">X: -9'7 1/4"</span>
  <span class="pos">Y: 36'5 3/4"</span>
  <div class="snaps">
    <button class="snap" aria-label="Grid snap"><svg class="ic"><use href="#snapg"/></svg></button>
    <button class="snap on" aria-label="Object snap"><svg class="ic"><use href="#sq"/></svg></button>
    <button class="snap on" aria-label="Angle snap"><svg class="ic"><use href="#ang"/></svg></button>
    <button class="snap on" aria-label="Intersection snap"><svg class="ic"><use href="#cross"/></svg></button>
    <button class="snap on" aria-label="Smart points"><svg class="ic"><use href="#ang"/></svg></button>
    <button class="snap on" aria-label="Distance snap"><svg class="ic"><use href="#diag"/></svg></button>
    <button class="snap on" aria-label="Edge snap"><svg class="ic"><use href="#diag"/></svg></button>
    <button class="snap" aria-label="Tangent snap"><svg class="ic"><use href="#arc"/></svg></button>
    <button class="snap" aria-label="Plane snap"><svg class="ic"><use href="#diam"/></svg></button>
    <button class="snap" aria-label="Suspend"><svg class="ic"><use href="#block"/></svg></button>
    <button class="snap" aria-label="Settings"><svg class="ic"><use href="#gear"/></svg></button>
  </div>
</footer>
</div>
</body>
</html>
```

FILE: styles.css
```css
* { box-sizing: border-box; }
body, h1, h2, h3, ul, dl, dd { margin: 0; padding: 0; }
body {
  background: #262626;
  color: #dcdcdc;
  font: 500 4px/6px Roboto, "Liberation Sans", sans-serif;
}
button, input, select {
  margin: 0; padding: 0; border: 0; min-width: 0; border-radius: 0;
  background: none; color: inherit; font: inherit; appearance: none; outline: 0;
}
.defs { position: absolute; }
.ic { display: block; width: 9px; height: 8px; flex: none; }
.wide { width: 11px; }
.slim { width: 5px; }
.mask { background: #000; }

.app {
  display: grid;
  grid-template: 10px minmax(0, 1fr) 10px / 104px minmax(0, 1fr) 260px;
  height: 100vh;
  min-height: 527px;
}
.titlebar {
  grid-column: 1 / -1;
  display: flex; align-items: center; gap: 5px;
  padding-left: 3px;
  background: #3a3a3a;
}
.titlebar .ic { width: 7px; height: 7px; }
.lights { display: flex; gap: 4px; }
.light { width: 4px; height: 4px; border-radius: 50%; background: #5e5e5e; }
.amber { background: #f0b33c; }
.green { background: #5fc454; }
.app-title { flex: 1; font-size: 5px; font-weight: 500; }
.mask-mid { width: 112px; height: 10px; margin-right: 369px; }
.mask-end { width: 47px; height: 10px; }

.bar {
  display: flex; align-items: center; gap: 3px;
  height: 7px; padding: 0 3px 0 2px;
  background: #191919;
  font-size: 5px; font-weight: 500;
}
.bar > span:first-child, .floating > span:first-child { font-size: 4px; }
.bar-end { display: flex; align-items: center; gap: 4px; margin-left: auto; }
.ham { width: 4px; height: 4px; background: repeating-linear-gradient(#aaa 0 1px, #444 1px 2px); }
.grip { height: 2px; text-align: center; line-height: 2px; font-size: 3px; color: #999; background: #202020; }
.legend {
  display: flex; align-items: center; gap: 3px;
  height: 7px; font-size: 4px; font-weight: 700;
}
.legend::after { content: ""; flex: 1; height: 1px; background: #333; }

.palettes {
  display: flex; flex-direction: column;
  min-height: 0; overflow: hidden;
  border-right: 2px solid #141414;
  background: #2f2f2f;
}
.basic { margin-bottom: 2px; }
.tools { display: flex; flex-direction: column; height: 147px; list-style: none; }
.bim { height: 188px; border-right: 3px solid #5a5a5a; border-top: 1px solid #2f2f2f; }
.tool { flex: 1; display: flex; align-items: center; gap: 1px; padding-left: 2px; font-weight: 700; }
.tool.on { background: #828282; color: #fff; }
.more::after {
  content: ""; margin: 0 1px 0 auto;
  border: 1px solid transparent; border-left: 2px solid #ccc; border-right: 0;
}
.tabs { display: flex; height: 11px; background: #202020; }
.tab { width: 12px; display: grid; place-items: center; background: #2a2a2a; border-right: 1px solid #1a1a1a; }
.tab.on { background: #868686; }
.attrs { flex: 1; background: #2b2b2b; }
.attr-legend { height: 11px; padding: 0 3px 0 1px; font-weight: 500; }
.attr {
  display: flex; align-items: center; gap: 2px;
  width: calc(100% - 3px); height: 9px; margin: 0 0 1px 1px;
  background: #555;
}
.attr .ic { width: 8px; height: 7px; }
.attr-select { flex: 1; text-align: center; text-align-last: center; height: 9px; font-weight: 700; }
.caret { width: 5px; height: 9px; flex: none; text-align: center; line-height: 8px; background: #3a3a3a; color: #ddd; }
.chev { width: 5px; height: 9px; }
.swatch { background: #fff; border: 1px solid #999; }
.cyan { background: #74fbfd; border-color: #9bd; }
.slider { background: linear-gradient(90deg, #bbb 3px, #7d7d7d 3px); }
.pct { margin-left: auto; font-size: 5px; }
.weight { background: #fff; color: #222; }
.stroke { flex: 1; height: 1px; background: #999; }
.ends { background: none; color: #ccc; }
.chain { width: 5px; height: 8px; }
.end { flex: 1; height: 8px; background: #232323; }
.shadow { display: flex; align-items: center; gap: 2px; height: 8px; padding: 0 2px 0 3px; }
.shadow .check { flex: 1; }
.dark { background: #000; }

.work { display: flex; flex-direction: column; min-width: 0; min-height: 0; background: #222; }
.docbar { height: 11px; padding: 1px 3px 0; background: #161616; }
.doc-mask { display: block; width: 92px; height: 10px; }
.viewbar, .modebar { display: grid; align-items: center; padding-left: 1px; }
.viewbar {
  height: 10px;
  grid-template-columns: 9px 10px 13px 76fr 18px 76fr 11px 11px 74fr 20px 10px 12px 8px 26px 9px 12px 75fr 9px 28px 9px 73fr 20px 19px 7px;
  background: #2a2a2a;
}
.viewbar .ic { width: 7px; height: 7px; }
.viewbar .wide { width: 10px; }
.viewbar .slim { width: 4px; }
.viewbar .sel { margin-right: 5px; }
.viewbar .field { margin-right: 4px; }
.mini { display: flex; width: 16px; height: 6px; background: linear-gradient(90deg, #555 11px, #3a70d8 11px); }
.viewbar .mini .ic { height: 6px; margin-left: 2px; }
.modebar {
  height: 14px;
  padding-left: 2px;
  grid-template-columns: 11px 12px 16px 16px 13px 12px 16px 16px 1fr 19px 14px 15px 14px 18px 15px 13px 19px 8px;
  background: #222;
}
.hint { font-weight: 400; }
.mode { width: 12px; height: 10px; display: grid; place-items: center; }
.mode.on { background: #777; }
.pair { display: flex; gap: 1px; align-items: center; }
.gear, .snap { color: #d3d8f5; }

.sel {
  height: 6px; padding-left: 2px;
  border-radius: 1px;
  background: linear-gradient(#3a70d8, #3a70d8) right / 4px 5px no-repeat #5c5c5c;
  font-size: 4px;
}
.flat { background-color: #2a2a2a; }
.field { height: 5px; padding-left: 2px; background: #222; border-bottom: 1px solid #3a3a3a; }

.canvas { position: relative; flex: 1; min-height: 0; overflow: hidden; }
.drawing { display: block; width: 100%; height: 100%; }
.drawing text { font-family: "Liberation Sans", Arial, sans-serif; font-weight: 400; }
.drawing .marker { font-size: 12px; text-anchor: middle; fill: #222; }
.drawing .note { font-size: 14px; font-weight: 700; fill: #ef4130; }
.drawing .room { font-size: 8px; text-anchor: middle; fill: #d2925c; text-decoration: underline; }
.tick text { font-size: 4px; fill: #333; }
.floating {
  position: absolute; left: 8px; right: 100px; top: 9px;
  display: flex; align-items: center; gap: 3px;
  height: 7px; padding: 0 3px 0 2px;
  background: #141414; box-shadow: 0 1px 2px #8888;
  font-size: 5px;
}
.return {
  position: absolute; right: 10px; top: 16px;
  padding: 2px 10px;
  border: 1px solid #8c8272; border-radius: 1px;
  background: #f8e7c8; color: #333;
  font: 400 5px/6px "Liberation Sans", Arial, sans-serif;
}

.info { display: flex; flex-direction: column; min-height: 0; border-left: 2px solid #141414; background: #262626; }
.info-tabs { display: flex; height: 10px; padding: 1px 2px 0; background: #111; font-size: 5px; }
.info-tab { padding: 0 4px; color: #999; border-right: 1px solid #333; }
.info-tab.on { background: #333; color: #eee; }
.obj { height: 9px; padding-left: 1px; font-size: 4px; font-weight: 700; line-height: 8px; }
.row {
  display: grid; grid-template-columns: 32px 1fr; align-items: center;
  height: 8px; padding-left: 3px;
}
.short { grid-template-columns: 13px 1fr; }
.coords {
  display: flex; gap: 6px;
  margin: 2px 0 1px 2px; padding: 0 4px 2px;
  border: 1px solid #333; border-radius: 2px;
}
.locks { padding-top: 3px; }
.locks .ic { width: 8px; height: 7px; }
.coords > div { flex: 1; }
.xyz { grid-template-columns: 7px 1fr; }
.wide-btn {
  display: block; width: calc(100% - 3px); height: 5px; margin: 1px 1px 1px 2px;
  background: #5c5c5c; line-height: 5px;
}
.info .legend { padding-left: 3px; }
.check { display: flex; align-items: center; gap: 2px; height: 7px; }
.info .check { padding-left: 2px; }
.box { width: 4px; height: 4px; border-radius: 1px; background: #3a70d8; }
.box:checked::after { content: "✓"; display: block; font-size: 4px; line-height: 4px; text-align: center; color: #fff; }
.dim { width: 5px; height: 5px; background: #505050; }
.facts {
  display: grid; grid-template-columns: 33px 1fr;
  margin-top: 5px; padding: 6px 3px 5px;
  border-top: 1px solid #333;
  line-height: 7px;
}
.name { grid-template-columns: 13px 1fr; height: 7px; padding-left: 1px; }
.nav { flex: 1; min-height: 0; display: flex; flex-direction: column; }
.nav-tabs { display: flex; height: 10px; padding: 1px 2px; background: #101010; }
.nav-tab { width: 9px; display: grid; place-items: center; }
.nav-tab .ic { width: 7px; height: 7px; }
.nav-tab.on { background: #555; }
.filter { grid-template-columns: 12px 1fr; height: 7px; padding-left: 1px; }
.search { display: flex; gap: 2px; height: 7px; margin-top: 1px; padding-left: 4px; background: #333; align-items: center; }
.search .ic { width: 6px; height: 6px; }
.search-in { flex: 1; font-size: 5px; }
.search-in::placeholder { color: #777; }
.sheets { flex: 1; min-height: 0; overflow: hidden; padding-bottom: 2px; border-right: 3px solid #555; }
.sheet-table { width: 100%; height: 100%; table-layout: fixed; border-collapse: collapse; line-height: 5px; }
.sheet-table th { height: 10px; border-bottom: 1px solid #383838; font-size: 4px; font-weight: 700; }
.sheet-table th, .sheet-table td { padding: 0; text-align: left; white-space: nowrap; }
.sheet-table td { font-weight: 500; color: #e0e0e0; }
.sheet-table th:nth-child(1) { width: 48px; }
.sheet-table th:nth-child(2) { width: 107px; }
.sheet-table td:first-child, .sheet-table th:first-child { padding-left: 15px; }
.picked { background: #466a98; }

.status {
  grid-column: 1 / -1;
  display: flex; align-items: center; gap: 17px;
  padding: 0 4px 0 2px;
  background: #262626;
}
.status > span:first-child { margin-right: auto; }
.pos { min-width: 24px; }
.snaps { display: flex; width: 103px; }
.snap { flex: 1; height: 9px; display: grid; place-items: center; border-right: 1px solid #262626; }
.snap .ic { width: 7px; height: 7px; }
.snap.on { background: #8a8a8a; }
```
